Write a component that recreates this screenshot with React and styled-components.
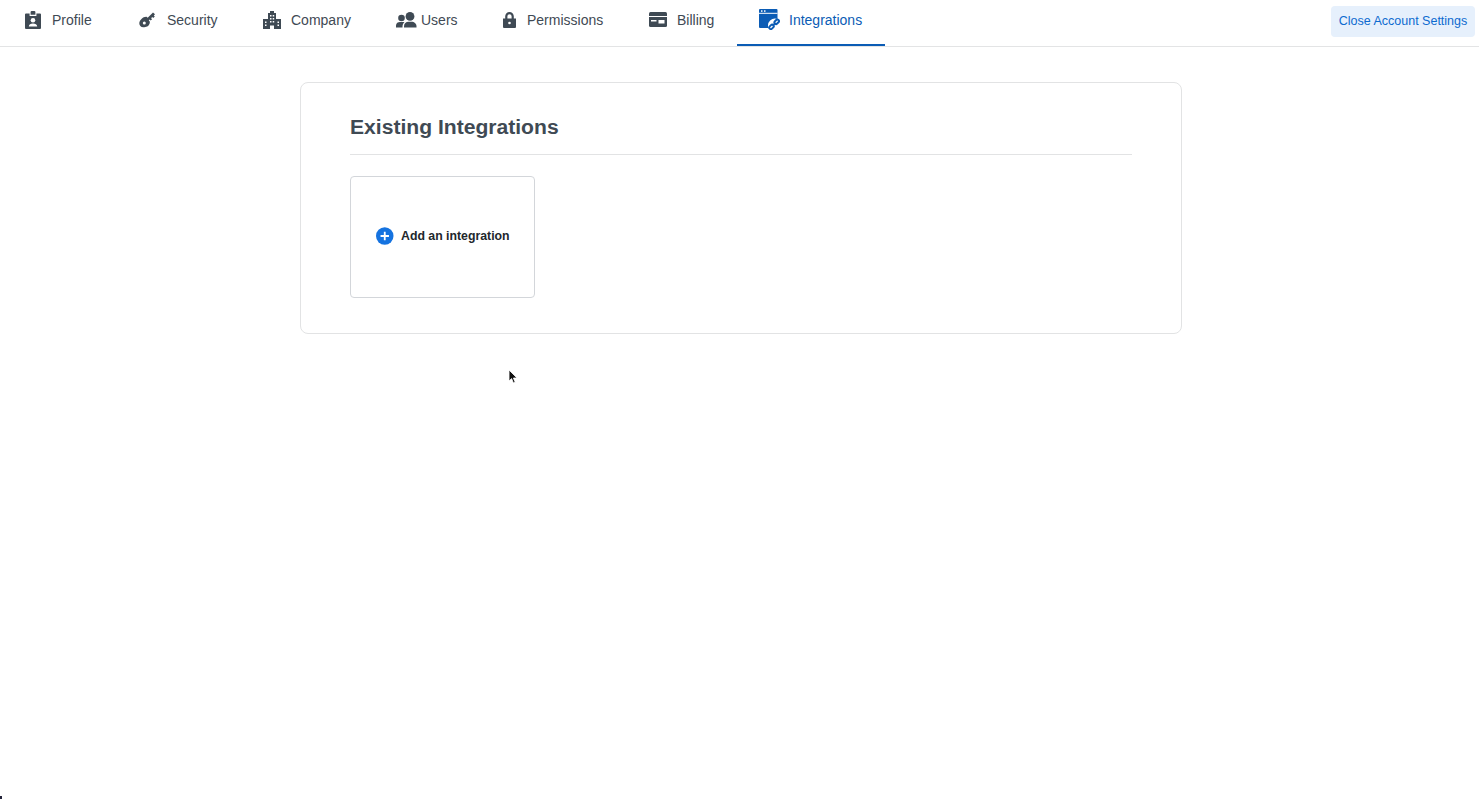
import React from 'react';
import styled, { createGlobalStyle } from 'styled-components';

const GlobalStyle = createGlobalStyle`
  html, body {
    margin: 0;
    padding: 0;
    background: #fff;
    font-family: "Liberation Sans", Arial, sans-serif;
  }
`;

const Page = styled.div`
  position: relative;
  width: 1479px;
  height: 799px;
  overflow: hidden;
  background: #fff;
`;

const TopBar = styled.div`
  display: flex;
  align-items: flex-start;
  justify-content: space-between;
  height: 46px;
  padding: 0 4px 0 3px;
  border-bottom: 1px solid #e3e4e5;
`;

const Tabs = styled.nav`
  display: flex;
  align-items: stretch;
  height: 46px;
`;

const Tab = styled.a`
  display: flex;
  align-items: center;
  box-sizing: border-box;
  height: 46px;
  width: ${(p) => p.$width}px;
  padding: 0 0 5px ${(p) => p.$pad}px;
  gap: ${(p) => p.$gap}px;
  font-size: 14px;
  color: ${(p) => (p.$active ? '#0b5cb5' : '#3f4a54')};
  border-bottom: 2px solid ${(p) => (p.$active ? '#0b5cb5' : 'transparent')};
  white-space: nowrap;
  cursor: pointer;
`;

const TabIcon = styled.svg`
  flex: none;
  fill: ${(p) => (p.$active ? '#0b5cb5' : '#3f4a54')};
`;

const CloseButton = styled.button`
  margin-top: 6px;
  width: 144px;
  height: 31px;
  padding: 0 0 1px;
  border: 0;
  border-radius: 4px;
  background: #e6f0fc;
  color: #0d6bd0;
  font-family: inherit;
  font-size: 12.5px;
  cursor: pointer;
`;

const Main = styled.main`
  display: flex;
  padding: 35px 0 0 300px;
`;

const Card = styled.section`
  box-sizing: border-box;
  width: 882px;
  height: 252px;
  padding: 30px 49px 0;
  border: 1px solid #e2e3e4;
  border-radius: 8px;
`;

const Title = styled.h2`
  margin: 0;
  height: 41px;
  line-height: 28px;
  font-size: 21.1px;
  font-weight: 700;
  color: #3f4a54;
  border-bottom: 1px solid #e2e3e4;
`;

const AddTile = styled.button`
  display: flex;
  align-items: center;
  box-sizing: border-box;
  width: 185px;
  height: 122px;
  margin-top: 21px;
  padding: 0 0 2px 25px;
  gap: 7px;
  background: #fff;
  border: 1px solid #d3d6da;
  border-radius: 4px;
  font-family: inherit;
  font-size: 12.3px;
  font-weight: 700;
  color: #22272c;
  cursor: pointer;
`;

const Cursor = styled.svg`
  position: absolute;
  left: 508px;
  top: 369px;
`;

const Corner = styled.div`
  position: absolute;
  left: 0;
  bottom: 0;
  width: 2px;
  height: 3px;
  background: #23233a;
`;

const ProfileIcon = () => (
  <TabIcon width="16" height="18" viewBox="0 0 16 18">
    <path d="M1 2.5h3.6V5h6.8V2.5H15a1 1 0 0 1 1 1V17a1 1 0 0 1-1 1H1a1 1 0 0 1-1-1V3.500a1 1 0 0 1 1-1z" />
    <path d="M5.600 3.800V1a1 1 0 0 1 1-1h2.800a1 1 0 0 1 1 1v2.800z" />
    <circle cx="8" cy="9.200" r="2.300" fill="#fff" />
    <path d="M3.800 15.400c0-2 1.800-3 4.200-3s4.200 1 4.200 3z" fill="#fff" />
  </TabIcon>
);

const SecurityIcon = () => (
  <TabIcon width="17" height="16" viewBox="0 0 17 16">
    <path d="M7.500 4.800l1.200 1L13 1.500 14 .5l2 1.800-1.200 1.200 1 1-1.600 1.600-1-1-1.100 1.100 1 1-1.500 1.400-1-1-.8.800 1 1.200c.4 2.600-1.700 5.400-4.500 5.400C2.400 16 .300 14 .300 11.300.300 8.200 4.200 4.500 7.500 4.800z" />
    <circle cx="5.300" cy="11" r="1.500" fill="#fff" />
  </TabIcon>
);

const CompanyIcon = () => (
  <TabIcon width="18" height="18" viewBox="0 0 18 18">
    <path d="M5 2h2V0h4v2h2v6h5v10h-7v-3.500H7V18H0V8h5z" />
    <g fill="#fff">
      <rect x="7" y="4" width="1.500" height="1.500" />
      <rect x="9.700" y="4" width="1.500" height="1.500" />
      <rect x="7" y="7" width="1.500" height="1.500" />
      <rect x="9.700" y="7" width="1.500" height="1.500" />
      <rect x="7" y="10" width="1.500" height="1.500" />
      <rect x="9.700" y="10" width="1.500" height="1.500" />
      <rect x="2" y="10.500" width="1.500" height="1.500" />
      <rect x="2" y="13.500" width="1.500" height="1.500" />
      <rect x="14.500" y="10.500" width="1.500" height="1.500" />
      <rect x="14.500" y="13.500" width="1.500" height="1.500" />
    </g>
  </TabIcon>
);

const UsersIcon = () => (
  <TabIcon width="21" height="16" viewBox="0 0 21 16">
    <circle cx="5.500" cy="6" r="3.300" />
    <circle cx="14" cy="4.400" r="4.400" />
    <path d="M0 15.500v-2C0 11 2 10 4 10h3c.6 0 1.100.1 1.500.3C7.300 11.300 6.500 12.700 6.500 14.500v1z" />
    <path d="M8 15.500v-1.200C8 11.500 10 9.800 12.500 9.800h3c2.700 0 5 1.800 5 4.500v1.200z" />
  </TabIcon>
);

const LockIcon = () => (
  <TabIcon width="13" height="16" viewBox="0 0 13 16">
    <path d="M2.200 6.500V4.300a4.300 4.300 0 0 1 8.600 0v2.200H13V15a1 1 0 0 1-1 1H1a1 1 0 0 1-1-1V6.500zm2.200 0h4.200V4.300a2.100 2.100 0 0 0-4.200 0z" fillRule="evenodd" />
    <circle cx="6.500" cy="11" r="1.300" fill="#fff" />
  </TabIcon>
);

const BillingIcon = () => (
  <TabIcon width="18" height="15" viewBox="0 0 18 15">
    <rect width="18" height="15" rx="1.500" />
    <g fill="#fff">
      <rect y="4" width="18" height="1" />
      <rect x="2" y="8" width="5.500" height="1.500" />
      <rect x="9.500" y="8" width="6" height="3.500" />
    </g>
  </TabIcon>
);

const IntegrationsIcon = () => (
  <TabIcon $active width="21" height="21" viewBox="0 0 21 21">
    <path d="M1 0h16.500a1 1 0 0 1 1 1v9a7 7 0 0 0-9 9H1a1 1 0 0 1-1-1V1a1 1 0 0 1 1-1z" />
    <rect y="3.800" width="18.500" height="1" fill="#fff" />
    <rect x="2" y="1.300" width="1.500" height="1.500" fill="#fff" />
    <rect x="5" y="1.300" width="1.500" height="1.500" fill="#fff" />
    <g fill="none" stroke="#0b5cb5" strokeWidth="2">
      <rect x="10" y="16.300" width="5" height="3.200" rx="1.600" transform="rotate(-45 12.500 17.900)" />
      <rect x="15.200" y="11.200" width="5" height="3.200" rx="1.600" transform="rotate(-45 17.700 12.800)" />
    </g>
    <rect x="13.300" y="14.400" width="3.600" height="1.800" fill="#0b5cb5" transform="rotate(-45 15.100 15.300)" />
  </TabIcon>
);

const PlusCircle = () => (
  <svg width="18" height="18" viewBox="0 0 18 18">
    <circle cx="8.750" cy="9" r="8.750" fill="#1573e0" />
    <path d="M8.750 4.800v8.400M4.550 9h8.400" stroke="#fff" strokeWidth="1.800" />
  </svg>
);

const tabs = [
  { label: 'Profile', icon: <ProfileIcon />, width: 114, pad: 22, gap: 11 },
  { label: 'Security', icon: <SecurityIcon />, width: 124, pad: 22, gap: 11 },
  { label: 'Company', icon: <CompanyIcon />, width: 133, pad: 22, gap: 10 },
  { label: 'Users', icon: <UsersIcon />, width: 107, pad: 22, gap: 4 },
  { label: 'Permissions', icon: <LockIcon />, width: 146, pad: 22, gap: 11 },
  { label: 'Billing', icon: <BillingIcon />, width: 110, pad: 22, gap: 10 },
  { label: 'Integrations', icon: <IntegrationsIcon />, width: 148, pad: 22, gap: 9, active: true },
];

const App = () => (
  <Page>
    <GlobalStyle />
    <TopBar>
      <Tabs>
        {tabs.map((t) => (
          <Tab key={t.label} $width={t.width} $pad={t.pad} $gap={t.gap} $active={t.active}>
            {t.icon}
            {t.label}
          </Tab>
        ))}
      </Tabs>
      <CloseButton>Close Account Settings</CloseButton>
    </TopBar>
    <Main>
      <Card>
        <Title>Existing Integrations</Title>
        <AddTile>
          <PlusCircle />
          Add an integration
        </AddTile>
      </Card>
    </Main>
    <Cursor width="10" height="16" viewBox="0 0 10 16">
      <path d="M1 1v11l2.600-2.400L5.400 14l1.800-.8-1.800-4.200H9z" fill="#111" stroke="#fff" strokeWidth="0.800" />
    </Cursor>
    <Corner />
  </Page>
);

export default App;
